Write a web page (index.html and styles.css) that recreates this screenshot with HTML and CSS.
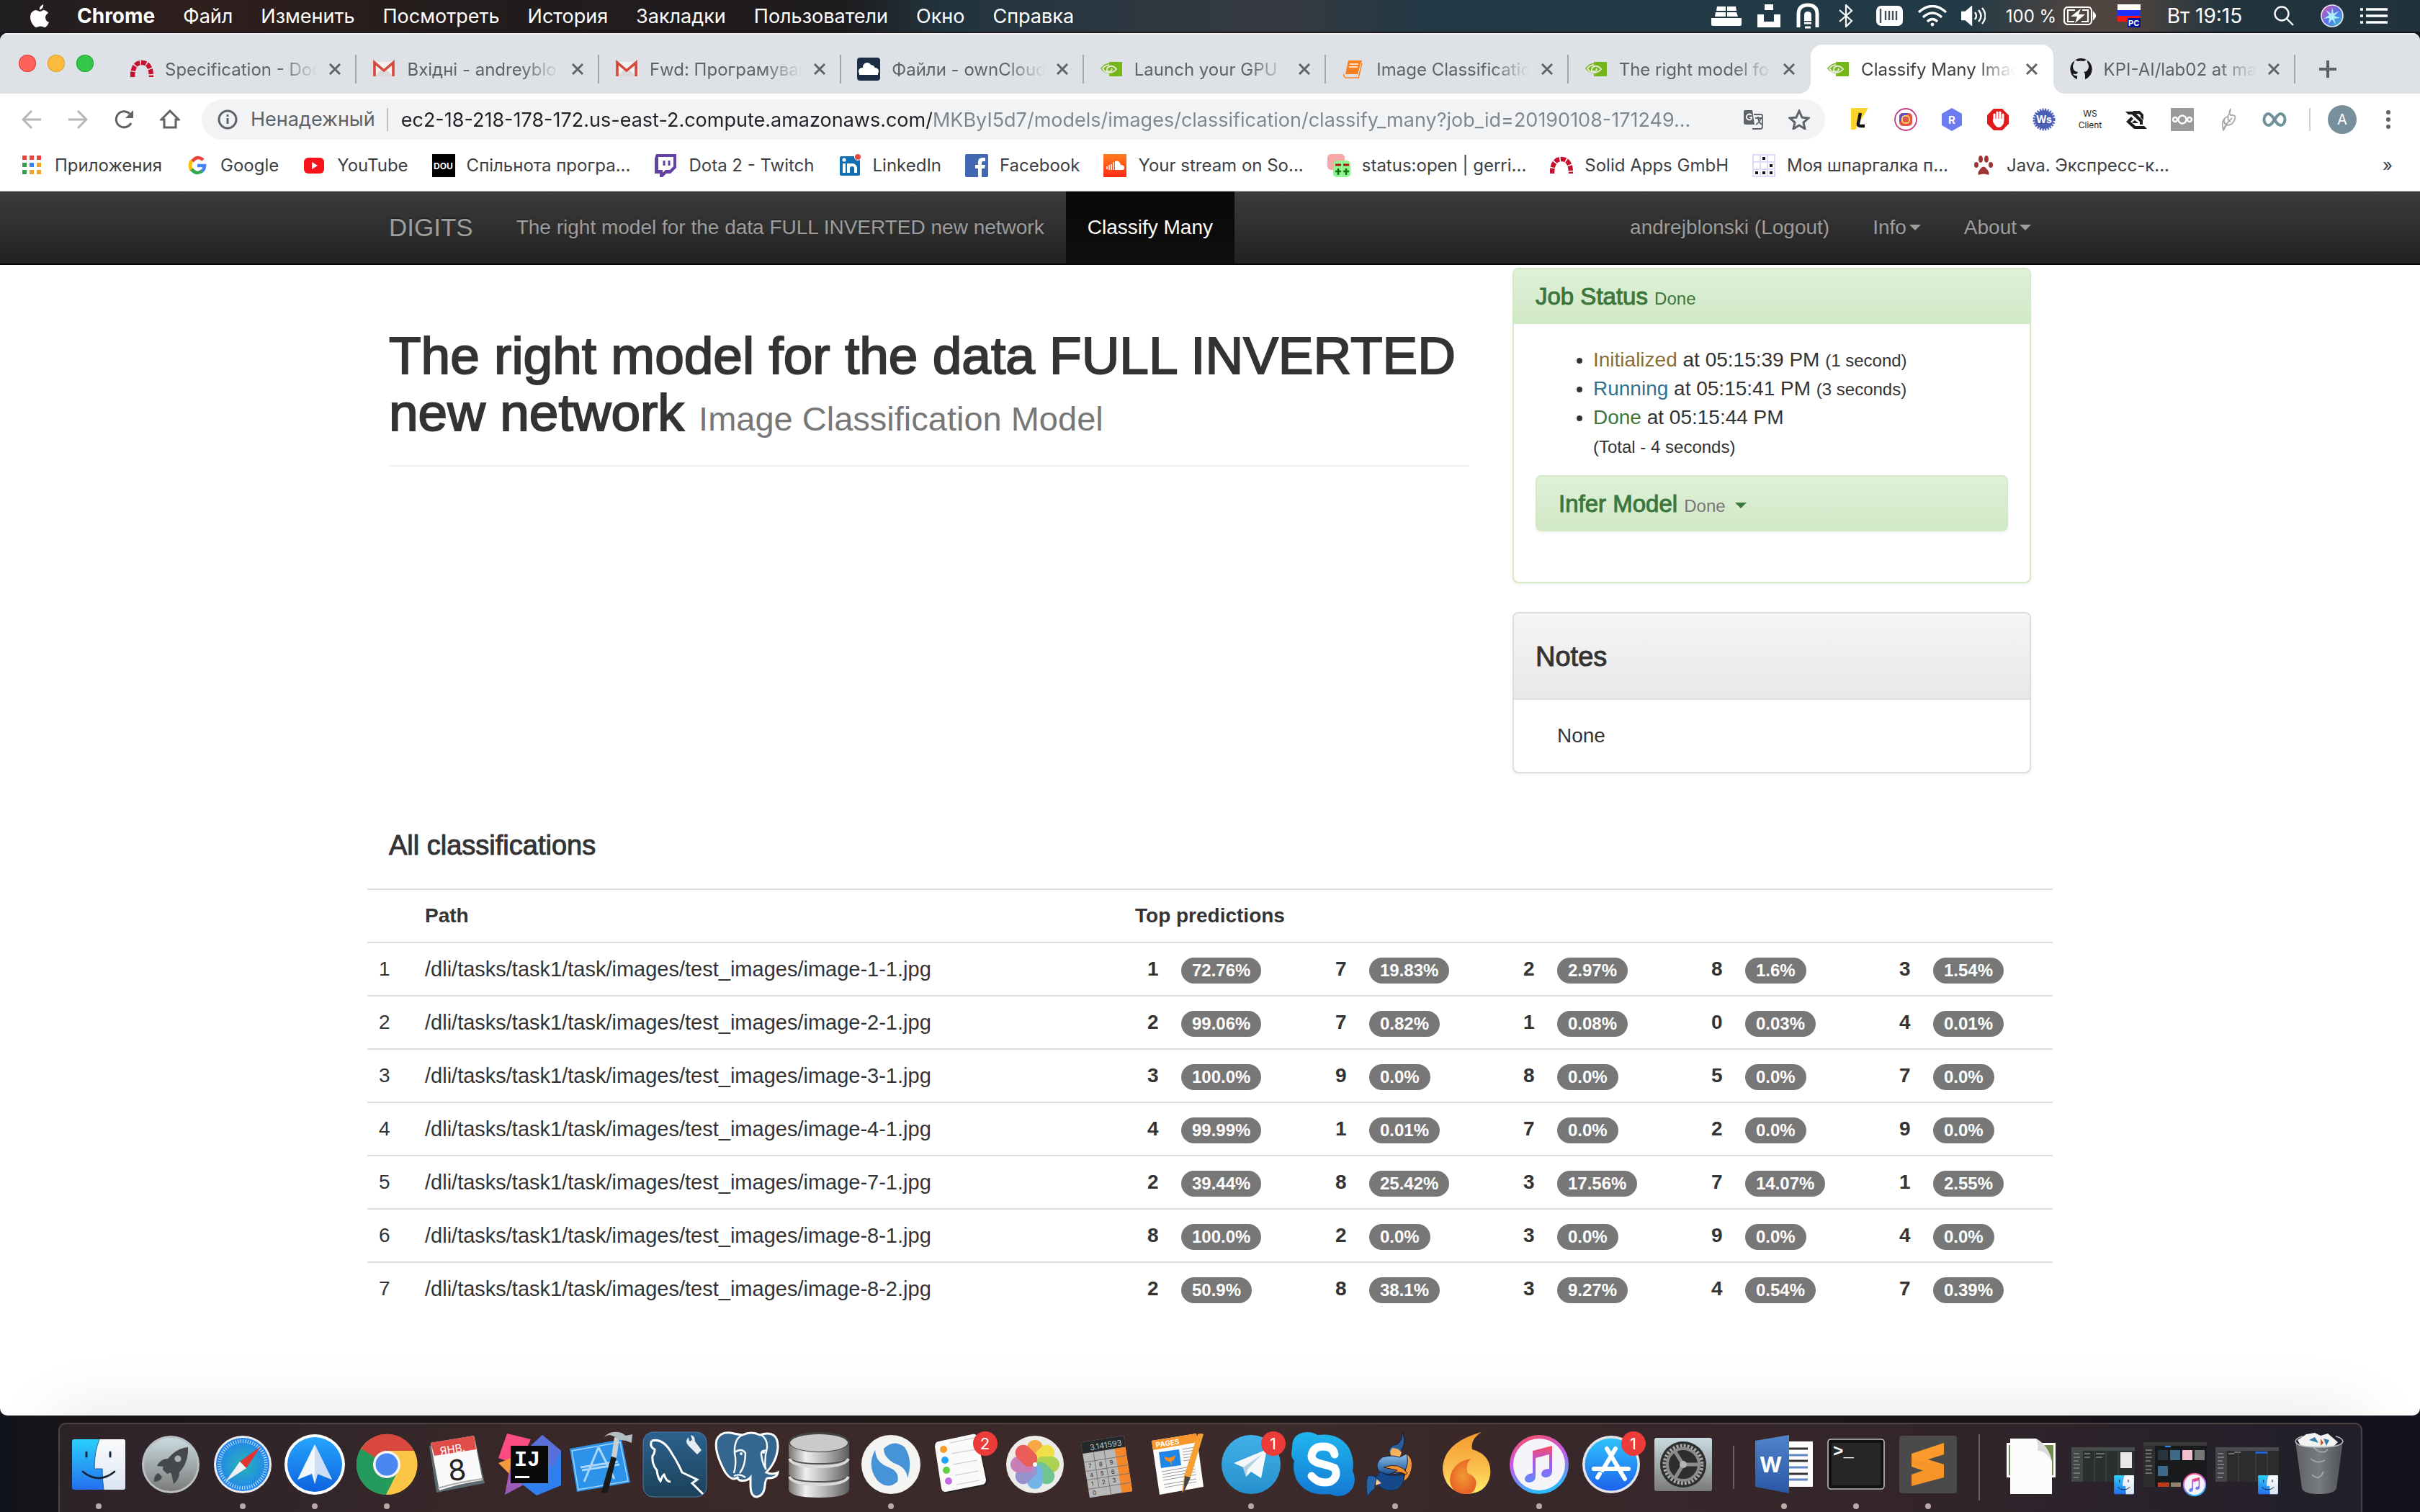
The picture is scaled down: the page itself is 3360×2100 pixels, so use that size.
FILE: index.html
```html
<!DOCTYPE html>
<html lang="ru">
<head>
<meta charset="utf-8">
<title>Classify Many Images</title>
<link rel="stylesheet" href="styles.css">
</head>
<body>
<svg class="defs" width="0" height="0" aria-hidden="true">
  <defs>
    <linearGradient id="gBlue" x1="0" y1="0" x2="0" y2="1"><stop offset="0" stop-color="#2fc3fb"/><stop offset="1" stop-color="#1d62ee"/></linearGradient>
    <linearGradient id="gSpark" x1="0" y1="0" x2="0" y2="1"><stop offset="0" stop-color="#26a5ff"/><stop offset="1" stop-color="#0d63dd"/></linearGradient>
    <linearGradient id="gFind" x1="0" y1="0" x2="0" y2="1"><stop offset="0" stop-color="#2bd0fb"/><stop offset="1" stop-color="#2470ef"/></linearGradient>
    <linearGradient id="gFace" x1="0" y1="0" x2="0" y2="1"><stop offset="0" stop-color="#fbfbfc"/><stop offset="1" stop-color="#dbe6f3"/></linearGradient>
    <linearGradient id="gGray" x1="0" y1="0" x2="0" y2="1"><stop offset="0" stop-color="#c9dbe0"/><stop offset="1" stop-color="#7b7b79"/></linearGradient>
    <linearGradient id="gSql" x1="0" y1="0" x2="0" y2="1"><stop offset="0" stop-color="#2c628e"/><stop offset="1" stop-color="#1c4159"/></linearGradient>
    <linearGradient id="gMetal" x1="0" y1="0" x2="1" y2="0"><stop offset="0" stop-color="#747474"/><stop offset=".28" stop-color="#efefef"/><stop offset=".6" stop-color="#b5b5b5"/><stop offset="1" stop-color="#5c5c5c"/></linearGradient>
    <linearGradient id="gTele" x1="0" y1="0" x2="0" y2="1"><stop offset="0" stop-color="#41b0e8"/><stop offset="1" stop-color="#2590cd"/></linearGradient>
    <linearGradient id="gSkype" x1="0" y1="0" x2="0" y2="1"><stop offset="0" stop-color="#20b6ef"/><stop offset="1" stop-color="#1379d3"/></linearGradient>
    <linearGradient id="gTunes" x1="0" y1="0" x2=".3" y2="1"><stop offset="0" stop-color="#fd4f57"/><stop offset=".5" stop-color="#c65bf0"/><stop offset="1" stop-color="#2fb6fb"/></linearGradient>
    <linearGradient id="gNote" x1="0" y1="0" x2="0" y2="1"><stop offset="0" stop-color="#fb4a5e"/><stop offset=".5" stop-color="#a459f3"/><stop offset="1" stop-color="#5a8dfa"/></linearGradient>
    <linearGradient id="gFlame" x1="0" y1="0" x2="0" y2="1"><stop offset="0" stop-color="#f59a2e"/><stop offset=".6" stop-color="#fbc04e"/><stop offset="1" stop-color="#fff06a"/></linearGradient>
    <linearGradient id="gWord" x1="0" y1="0" x2="0" y2="1"><stop offset="0" stop-color="#4f84cc"/><stop offset="1" stop-color="#2a57a4"/></linearGradient>
    <linearGradient id="gTrash" x1="0" y1="0" x2="1" y2="0"><stop offset="0" stop-color="#606467"/><stop offset=".5" stop-color="#777b7e"/><stop offset="1" stop-color="#505456"/></linearGradient>
    <linearGradient id="gCloud" x1="0" y1="0" x2="0" y2="1"><stop offset="0" stop-color="#ff7d1d"/><stop offset="1" stop-color="#ff2a17"/></linearGradient>
    <linearGradient id="gBody" x1="0" y1="0" x2="0" y2="1"><stop offset="0" stop-color="#8cc3ee"/><stop offset="1" stop-color="#1a4f94"/></linearGradient>
    <linearGradient id="gSiri" x1="0" y1="0" x2="1" y2="1"><stop offset="0" stop-color="#e84fb2"/><stop offset=".5" stop-color="#5b6fe8"/><stop offset="1" stop-color="#35c8c5"/></linearGradient>
    <radialGradient id="gSafari"><stop offset="0" stop-color="#26b4b4"/><stop offset="1" stop-color="#2383f0"/></radialGradient>
    <radialGradient id="gLeaf"><stop offset="0" stop-color="#f19a33"/><stop offset="1" stop-color="#e96425"/></radialGradient>
    <symbol id="nvidia" viewBox="0 0 32 32"><path d="M13 6h18v20H13z" fill="#76b51b"/><path d="M1 15q7-9 15-7 8 2 11 8-5 8-13 7Q5 21 1 15z" fill="#76b51b"/><path d="M13 10q-6 1-9 5 3 6 10 6 6-1 9-5-4-5-9-4-5 2-4 6 2 2 5 1 3-2 1-4" fill="none" stroke="#dfe9d3" stroke-width="2"/></symbol>
    <symbol id="gmail" viewBox="0 0 32 32"><path d="M3 6h26v20H3z" fill="#f3f1f0"/><path d="M3 26l10-10 3 3 3-3 10 10z" fill="#dcdad8"/><path d="M3 26V7l13 11L29 7v19" fill="none" stroke="#d5483c" stroke-width="3.6"/></symbol>
    <symbol id="arch" viewBox="0 0 32 32"><path d="M3 27Q3 7 16 7t13 20" fill="none" stroke="#c8102e" stroke-width="6.5" stroke-dasharray="7 1.6"/></symbol>
    <symbol id="finder" viewBox="0 0 96 96"><rect x="11" y="13" width="74" height="70" rx="3" fill="url(#gFind)"/><path d="M49 13h33q3 0 3 3v64q0 3-3 3H55q-2-14-2-29H42q0-24 7-41z" fill="url(#gFace)"/><path d="M49 13Q42 30 42 54h11q0 15 2 29" fill="none" stroke="#1d5fa8" stroke-width="1"/><path d="M31 31v6M64 31v6" stroke="#152b45" stroke-width="3" stroke-linecap="round"/><path d="M26 58q22 18 44 0" fill="none" stroke="#13202f" stroke-width="2.6" stroke-linecap="round"/></symbol>
    <symbol id="tunes" viewBox="0 0 96 96"><circle cx="48" cy="48" r="41" fill="url(#gTunes)"/><circle cx="48" cy="48" r="36" fill="#f5f4f8"/><path d="M39 29l27-7v35q0 8-8 9-7 0-7-5 1-7 11-7V34l-19 5v25q0 8-8 9-7 0-7-5 1-7 11-8z" fill="url(#gNote)"/></symbol>
  </defs>
</svg>

<div class="desktop">
  <header class="menubar">
    <nav class="menus" aria-label="Меню">
      <svg class="apple" viewBox="0 0 26 32" fill="#fff"><path d="M18 0q1 5-5 8-1-5 5-8zM13 10q2 0 5-2 4 0 7 4-6 4-3 10 1 2 4 3-2 5-5 7-2 0-4-1-3-1-6 0-3 2-5 0-6-6-6-13 0-8 7-10 2 0 6 2z"/></svg>
      <strong>Chrome</strong><span>Файл</span><span>Изменить</span><span>Посмотреть</span><span>История</span><span>Закладки</span><span>Пользователи</span><span>Окно</span><span>Справка</span>
    </nav>
    <div class="status">
      <span class="w54"><svg width="42" height="30" viewBox="0 0 42 30" fill="#fff"><path d="M8 2h12v6H7zM22 2h12l1 6H22zM6 10h14v6H5zM22 10h13l2 6H22zM0 18h42v9q0 2-2 2H2q-2 0-2-2z"/></svg></span>
      <span class="w64"><svg width="32" height="32" viewBox="0 0 32 32" fill="#fff"><path d="M10 0h12v8H10zM0 14h9v10h14V14h9v18H0z"/></svg></span>
      <span class="w44"><svg width="32" height="36" viewBox="0 0 32 36" fill="none" stroke="#fff"><path d="M3 34V16Q3 3 16 3t13 13v18" stroke-width="5"/><path d="M11 25v-8q0-5 5-5t5 5v8z" fill="#fff" stroke="none"/><path d="M11 28h10M12 34h8" stroke-width="3"/></svg></span>
      <span class="w62"><svg width="22" height="32" viewBox="0 0 22 32" fill="none" stroke="#fff" stroke-width="2.2"><path d="M2 8l17 15-8 8V1l8 8L2 24"/></svg></span>
      <span class="w60"><svg width="38" height="28" viewBox="0 0 38 28"><rect width="37" height="28" rx="7" fill="#fff"/><path d="M6 4v20M13 7v13M18 7v13M23 7v13M28 7v13" stroke="#41505a" stroke-width="2.4"/></svg></span>
      <span class="w58"><svg width="42" height="30" viewBox="0 0 42 30" fill="none" stroke="#fff" stroke-width="3.4"><path d="M2 10q19-17 38 0M8 17q13-12 26 0M14 23q7-7 14 0"/><circle cx="21" cy="27" r="2" fill="#fff" stroke-width="1"/></svg></span>
      <span class="w56"><svg width="34" height="28" viewBox="0 0 34 28" fill="none" stroke="#fff" stroke-width="2.4"><path d="M1 9h5l8-7v24l-8-7H1z" fill="#fff"/><path d="M19 9q4 5 0 10M24 6q7 8 0 16M29 3q9 11 0 22"/></svg></span>
      <span class="w160">100 %<svg width="46" height="26" viewBox="0 0 46 26" fill="none" stroke="#fff" stroke-width="2.2"><rect x="1" y="1" width="38" height="24" rx="5"/><path d="M42 9q4 4 0 8z" fill="#fff"/><path d="M16 5H6v16h9M26 5h8v16h-9" fill="none"/><path d="M24 3L10 14h9l-3 9 14-12h-9z" fill="#fff" stroke="none"/></svg></span>
      <span class="w56"><svg width="32" height="34" viewBox="0 0 32 34"><path d="M0 1h32v8H0z" fill="#fff"/><path d="M0 9h32v8H0z" fill="#1f2fff"/><path d="M0 17h32v8H0z" fill="#f21818"/><path d="M14 20h18v13H14z" fill="#00129c"/><text x="15" y="31" font-size="11" font-weight="700" fill="#fff">РС</text></svg></span>
      <span class="w154">Вт 19:15</span>
      <span class="w68"><svg width="32" height="30" viewBox="0 0 32 30" fill="none" stroke="#fff" stroke-width="2.4"><circle cx="12" cy="12" r="9.5"/><path d="M19 19l9 9"/></svg></span>
      <span class="w64"><svg width="32" height="32" viewBox="0 0 32 32"><circle cx="16" cy="16" r="15" fill="url(#gSiri)" stroke="#e8e8ee" stroke-width="1.6"/><path d="M16 4l2 9 8-4-7 7 8 3-8 1 2 8-5-7-5 6 1-8-8 1 8-5-5-7 8 5z" fill="#a9f0fb"/></svg></span>
      <span class="w52"><svg width="38" height="24" viewBox="0 0 38 24" stroke="#fff" stroke-width="3.4"><path d="M8 3h30M8 12h30M8 21h30M0 3h4M0 12h4M0 21h4"/></svg></span>
    </div>
  </header>

  <div class="window">
    <div class="tabstrip">
      <div class="lights"><button class="red" aria-label="Закрыть"></button><button class="yellow" aria-label="Свернуть"></button><button class="green" aria-label="Развернуть"></button></div>
      <div class="tabs">
        <div class="tab"><svg class="fav"><use href="#arch"/></svg><span class="title">Specification - Doc</span><button class="close" aria-label="Закрыть вкладку"><svg viewBox="0 0 18 18"><path d="M2 2l14 14M16 2L2 16"/></svg></button><i class="sep"></i></div>
        <div class="tab"><svg class="fav"><use href="#gmail"/></svg><span class="title">Вхідні - andreyblo</span><button class="close" aria-label="Закрыть вкладку"><svg viewBox="0 0 18 18"><path d="M2 2l14 14M16 2L2 16"/></svg></button><i class="sep"></i></div>
        <div class="tab"><svg class="fav"><use href="#gmail"/></svg><span class="title">Fwd: Програмуван</span><button class="close" aria-label="Закрыть вкладку"><svg viewBox="0 0 18 18"><path d="M2 2l14 14M16 2L2 16"/></svg></button><i class="sep"></i></div>
        <div class="tab"><svg class="fav" viewBox="0 0 32 32"><rect width="32" height="32" rx="4" fill="#1d2d44"/><g fill="#fff"><circle cx="14" cy="13" r="6"/><circle cx="7" cy="19" r="5"/><circle cx="25" cy="19" r="5"/><circle cx="19" cy="16" r="6"/><path d="M3 18h26v6H3z"/></g></svg><span class="title">Файли - ownCloud</span><button class="close" aria-label="Закрыть вкладку"><svg viewBox="0 0 18 18"><path d="M2 2l14 14M16 2L2 16"/></svg></button><i class="sep"></i></div>
        <div class="tab"><svg class="fav"><use href="#nvidia"/></svg><span class="title">Launch your GPU T</span><button class="close" aria-label="Закрыть вкладку"><svg viewBox="0 0 18 18"><path d="M2 2l14 14M16 2L2 16"/></svg></button><i class="sep"></i></div>
        <div class="tab"><svg class="fav" viewBox="0 0 32 32"><path d="M9 4h19l-5 19H5z" fill="#f97f1f"/><path d="M4 23v5h18l5-20M11 9h12M10 13h12" fill="none" stroke="#fff" stroke-width="1.6"/><path d="M3 23q0 5 3 5h17l5-20" fill="none" stroke="#f97f1f" stroke-width="1.6"/></svg><span class="title">Image Classificatio</span><button class="close" aria-label="Закрыть вкладку"><svg viewBox="0 0 18 18"><path d="M2 2l14 14M16 2L2 16"/></svg></button><i class="sep"></i></div>
        <div class="tab"><svg class="fav"><use href="#nvidia"/></svg><span class="title">The right model fo</span><button class="close" aria-label="Закрыть вкладку"><svg viewBox="0 0 18 18"><path d="M2 2l14 14M16 2L2 16"/></svg></button><i class="sep none"></i></div>
        <div class="tab active"><svg class="fav"><use href="#nvidia"/></svg><span class="title">Classify Many Imag</span><button class="close" aria-label="Закрыть вкладку"><svg viewBox="0 0 18 18"><path d="M2 2l14 14M16 2L2 16"/></svg></button><i class="sep none"></i></div>
        <div class="tab"><svg class="fav" viewBox="0 0 32 32"><path d="M16 1a15 15 0 0 0-5 29V25q-4 1-6-3 4 2 6 0 1-2 1-2-7-1-7-8 0-3 2-5-1-3 1-4l4 2q4-1 8 0l4-2q2 1 1 4 2 2 2 5 0 7-7 8 2 1 2 4v6A15 15 0 0 0 16 1z" fill="#191717"/></svg><span class="title">KPI-AI/lab02 at ma</span><button class="close" aria-label="Закрыть вкладку"><svg viewBox="0 0 18 18"><path d="M2 2l14 14M16 2L2 16"/></svg></button><i class="sep"></i></div>
      </div>
      <button class="newtab" aria-label="Новая вкладка"><svg width="26" height="26" viewBox="0 0 26 26" stroke="#5f6368" stroke-width="4"><path d="M13 1v24M1 13h24"/></svg></button>
    </div>

    <div class="toolbar">
      <button class="cell" aria-label="Назад"><svg width="28" height="26" viewBox="0 0 28 26" class="ln faint"><path d="M14 1L2 13l12 12M2 13h25"/></svg></button>
      <button class="cell" aria-label="Вперёд"><svg width="28" height="26" viewBox="0 0 28 26" class="ln faint"><path d="M14 1l12 12-12 12M26 13H1"/></svg></button>
      <button class="cell" aria-label="Обновить"><svg width="28" height="28" viewBox="0 0 28 28" class="ln"><path d="M24 19A11 11 0 1 1 22 6"/><path d="M27 1v11H16z" fill="#5f6368" stroke="none"/></svg></button>
      <button class="cell" aria-label="Домой"><svg width="28" height="28" viewBox="0 0 28 28" class="ln"><path d="M2 14L14 2l12 12h-4v11H6V14z"/></svg></button>
      <div class="omnibox">
        <svg width="28" height="28" viewBox="0 0 28 28" class="ln"><circle cx="14" cy="14" r="12"/><path d="M14 12v8M14 7v3"/></svg>
        <label for="url" class="secure">Ненадежный</label>
        <input id="url" class="url" type="text" value="ec2-18-218-178-172.us-east-2.compute.amazonaws.com/MKByI5d7/models/images/classification/classify_many?job_id=20190108-171249...">
        <button aria-label="Перевести"><svg width="30" height="30" viewBox="0 0 30 30"><path d="M3 2h11l3 20H5q-3 0-3-3V4z" fill="#5f6368"/><path d="M16 8h10q2 0 2 2v15q0 3-3 3H14" fill="none" stroke="#5f6368" stroke-width="1.8"/><path d="M18 13h9M22 11v2q1 6 5 9M26 13q-2 6-7 9" fill="none" stroke="#5f6368" stroke-width="1.8"/><path d="M13 9a4 4 0 1 0 0 5v-2h-3" fill="none" stroke="#fff" stroke-width="1.8"/></svg></button>
        <button aria-label="Добавить в закладки"><svg width="30" height="28" viewBox="0 0 30 28" class="ln"><path d="M15 2l4 9 9 1-7 6 2 9-8-5-8 5 2-9-7-6 9-1z"/></svg></button>
      </div>
      <div class="exts">
        <span class="cell"><svg width="32" height="32" viewBox="0 0 32 32"><path d="M4 0h24L10 30H4z" fill="#fdd32e"/><path d="M17 7l-3 14q-1 5 6 4h3" fill="none" stroke="#111" stroke-width="4.4"/></svg></span>
        <span class="cell"><svg width="32" height="32" viewBox="0 0 32 32"><circle cx="16" cy="16" r="15" fill="#fff" stroke="#c33c80" stroke-width="1.8"/><rect x="7" y="7" width="18" height="18" rx="5" fill="#e5534b"/><path d="M7 13q0-6 6-6h7L7 20z" fill="#6a48c9"/><rect x="11" y="11" width="10" height="10" rx="4" fill="none" stroke="#fcd65b" stroke-width="2"/></svg></span>
        <span class="cell"><svg width="32" height="32" viewBox="0 0 32 32"><path d="M16 0l14 8v16l-14 8L2 24V8z" fill="#6b7bf0"/><text x="11" y="22" font-size="15" font-weight="700" fill="#fff">R</text></svg></span>
        <span class="cell"><svg width="32" height="32" viewBox="0 0 32 32"><path d="M10 1h12l9 9v12l-9 9H10l-9-9V10z" fill="#e01b1b"/><path d="M11 18V9M15 15V6M19 15V6M23 18V9" stroke="#fff" stroke-width="3" stroke-linecap="round"/><path d="M9 15h15v6q-3 6-7 6t-8-8z" fill="#fff"/></svg></span>
        <span class="cell"><svg width="32" height="32" viewBox="0 0 32 32"><circle cx="16" cy="16" r="13" fill="#4a5fb5"/><circle cx="16" cy="16" r="14" fill="none" stroke="#4a5fb5" stroke-width="3" stroke-dasharray="2.2 1.5"/><text x="5" y="21" font-size="14" font-weight="700" fill="#fff">Ws</text></svg></span>
        <span class="cell ws">WS<br>Client</span>
        <span class="cell"><svg width="32" height="32" viewBox="0 0 32 32" fill="#1c1c1c"><path d="M1 5h12l12 12v6h-4v-4L10 9H5z"/><path d="M11 4h10l5 5v8l-4-4v-3l-3-2h-4z"/><path d="M9 12l3 3-4 4 7 6h12l4 4H13L2 19z"/><path d="M14 17l5 4h-7l-2-1z"/></svg></span>
        <span class="cell"><svg width="32" height="32" viewBox="0 0 32 32"><path d="M0 0h32v32H0z" fill="#9a9a9a"/><g fill="none" stroke="#fff" stroke-width="2.4"><circle cx="16" cy="16" r="5.5"/><circle cx="6" cy="16" r="3"/><circle cx="26" cy="16" r="3"/></g></svg></span>
        <span class="cell"><svg width="26" height="32" viewBox="0 0 26 32" fill="none" stroke="#a9a9a9" stroke-width="1.8"><path d="M16 1q-3 6 0 9 8-1 6 5-2 9-12 9l-4 7q-4-14 4-18 5-3 6-12zM6 29q6-10 12-15M8 14q-3 6 2 9M13 12q-2 5 3 7"/></svg></span>
        <span class="cell"><svg width="34" height="22" viewBox="0 0 34 22" fill="none" stroke="#6f9299" stroke-width="4"><path d="M17 11C13 5 11 3 8.500 3a6 8 0 0 0 0 16C13 19 14 15 17 11S22 3 25.500 3a6 8 0 0 1 0 16C22 19 20 16 17 11z"/></svg></span>
      </div>
      <i class="divider"></i>
      <button class="avatar" aria-label="Профиль">А</button>
      <button class="more" aria-label="Настройка"><svg width="6" height="28" viewBox="0 0 6 28" fill="#5f6368"><circle cx="3" cy="4" r="3"/><circle cx="3" cy="14" r="3"/><circle cx="3" cy="24" r="3"/></svg></button>
    </div>

    <nav class="bookmarks" aria-label="Закладки">
      <a href="#"><svg viewBox="0 0 32 32"><path d="M3 2h6v6H3zM13 2h6v6h-6zM23 2h6v6h-6z" fill="#e8453c"/><path d="M3 12h6v6H3zM3 22h6v6H3z" fill="#3a9b53"/><path d="M13 12h6v6h-6z" fill="#3b82f0"/><path d="M23 12h6v6h-6zM13 22h6v6h-6zM23 22h6v6h-6z" fill="#f0a42c"/></svg>Приложения</a>
      <a href="#"><svg viewBox="0 0 32 32" fill="none" stroke-width="4.6"><path d="M24 8Q16 1 9 10" stroke="#ea4335"/><path d="M8 9q-4 7 0 14" stroke="#fbbc05"/><path d="M8 21q7 9 15 2" stroke="#34a853"/><path d="M16 16h10q0 5-4 8" stroke="#4285f4"/></svg>Google</a>
      <a href="#"><svg viewBox="0 0 32 32"><rect x="2" y="5" width="28" height="22" rx="6" fill="#f8131b"/><path d="M13 11l8 5-8 5z" fill="#fff"/></svg>YouTube</a>
      <a href="#"><svg viewBox="0 0 32 32"><path d="M0 0h32v32H0z"/><text x="2" y="21" font-size="12" font-weight="700" fill="#fff">DOU</text></svg>Спільнота програ...</a>
      <a href="#"><svg viewBox="0 0 32 32"><path d="M3 0h28v19l-8 8h-6l-5 5H8v-5H1V6z" fill="#6441a4"/><path d="M6 4h21v13l-5 5h-6l-4 4v-4H6z" fill="#fff"/><path d="M14 9v7M21 9v7" stroke="#6441a4" stroke-width="3"/></svg>Dota 2 - Twitch</a>
      <a href="#"><svg viewBox="0 0 32 32"><rect x="2" y="3" width="28" height="27" rx="2" fill="#0f6fb2"/><path d="M8 13v13" stroke="#fff" stroke-width="4"/><path d="M14 26V13M14 19q1-4 5-4t5 4v7" fill="none" stroke="#fff" stroke-width="4"/><circle cx="8" cy="8" r="2.6" fill="#fff"/><circle cx="27" cy="4" r="4.500" fill="#e4483d" stroke="#fff"/></svg>LinkedIn</a>
      <a href="#"><svg viewBox="0 0 32 32"><rect width="32" height="32" rx="2" fill="#4267b2"/><path d="M18 32V20h-4v-5h4v-4q0-6 6-6h4v5h-3q-2 0-2 2v3h5l-1 5h-4v12z" fill="#fff"/></svg>Facebook</a>
      <a href="#"><svg viewBox="0 0 32 32"><path d="M0 0h32v32H0z" fill="url(#gCloud)"/><path d="M16 10q6-2 8 5 5 0 5 4 0 3-3 3H16z" fill="#fff"/><path d="M5 17v4M8 15v7M11 14v8M14 11v11" stroke="#fff" stroke-width="1.6"/></svg>Your stream on So...</a>
      <a href="#"><svg viewBox="0 0 32 32"><rect width="24" height="22" rx="5" fill="#f7a9aa"/><rect x="8" y="9" width="24" height="23" rx="5" fill="#90f590"/><path d="M11 15h8M22 15h8" stroke="#b31312" stroke-width="3"/><path d="M11 24h8M15 20v9M22 24h8M26 20v9" stroke="#15700f" stroke-width="2.6"/></svg>status:open | gerri...</a>
      <a href="#"><svg><use href="#arch"/></svg>Solid Apps GmbH</a>
      <a href="#"><svg viewBox="0 0 32 32"><path d="M1 1h30v30H1zM11 1v30M21 1v30M1 11h30M1 21h30" fill="#fff" stroke="#dcdcfa" stroke-width="2"/><path d="M14 4h4v4h-4zM24 14h4v4h-4zM4 24h4v4H4zM14 24h4v4h-4zM24 24h4v4h-4z" fill="#1b1020"/></svg>Моя шпаргалка п...</a>
      <a href="#"><svg viewBox="0 0 32 32" fill="#9c3534"><path d="M9 29q-2-4 4-10 3-3 6 0 6 6 4 10-7-3-14 0z"/><ellipse cx="6" cy="15" rx="3" ry="4"/><ellipse cx="12" cy="7" rx="3" ry="5"/><ellipse cx="20" cy="7" rx="3" ry="5"/><ellipse cx="26" cy="15" rx="3" ry="4"/></svg>Java. Экспресс-к...</a>
      <button class="overflow" aria-label="Другие закладки">»</button>
    </nav>

    <main class="page">
      <div class="navbar">
        <div class="container">
          <a class="brand" href="#">DIGITS</a>
          <a class="link" href="#">The right model for the data FULL INVERTED new network</a>
          <a class="link current" href="#">Classify Many</a>
          <span class="push"></span>
          <a class="link" href="#">andrejblonski (Logout)</a>
          <a class="link" href="#">Info<i class="caret"></i></a>
          <a class="link" href="#">About<i class="caret"></i></a>
        </div>
      </div>
      <div class="container top">
        <div class="main-col">
          <h1>The right model for the data FULL INVERTED new network <small>Image Classification Model</small></h1>
        </div>
        <aside class="side-col">
          <section class="panel success">
            <div class="panel-heading"><h4>Job Status <small>Done</small></h4></div>
            <div class="panel-body">
              <ul>
                <li><span class="warn">Initialized</span> at 05:15:39 PM <small>(1 second)</small></li>
                <li><span class="info">Running</span> at 05:15:41 PM <small>(3 seconds)</small></li>
                <li><span class="done">Done</span> at 05:15:44 PM</li>
              </ul>
              <div class="total"><small>(Total - 4 seconds)</small></div>
              <button class="infer"><span class="infer-name">Infer Model</span> <small>Done</small> <i class="caret"></i></button>
            </div>
          </section>
          <section class="panel">
            <div class="panel-heading notes"><h4>Notes</h4></div>
            <div class="panel-body notes-body">None</div>
          </section>
        </aside>
      </div>
      <div class="container block">
        <h4 class="table-title">All classifications</h4>
        <table>
          <colgroup><col class="c-num"><col class="c-path"><col class="c-pred"><col class="c-pred"><col class="c-pred"><col class="c-pred"><col></colgroup>
          <thead><tr><th></th><th>Path</th><th colspan="5">Top predictions</th></tr></thead>
          <tbody>
            <tr><td>1</td><td>/dli/tasks/task1/task/images/test_images/image-1-1.jpg</td><td><b>1</b><span class="badge">72.76%</span></td><td><b>7</b><span class="badge">19.83%</span></td><td><b>2</b><span class="badge">2.97%</span></td><td><b>8</b><span class="badge">1.6%</span></td><td><b>3</b><span class="badge">1.54%</span></td></tr>
            <tr><td>2</td><td>/dli/tasks/task1/task/images/test_images/image-2-1.jpg</td><td><b>2</b><span class="badge">99.06%</span></td><td><b>7</b><span class="badge">0.82%</span></td><td><b>1</b><span class="badge">0.08%</span></td><td><b>0</b><span class="badge">0.03%</span></td><td><b>4</b><span class="badge">0.01%</span></td></tr>
            <tr><td>3</td><td>/dli/tasks/task1/task/images/test_images/image-3-1.jpg</td><td><b>3</b><span class="badge">100.0%</span></td><td><b>9</b><span class="badge">0.0%</span></td><td><b>8</b><span class="badge">0.0%</span></td><td><b>5</b><span class="badge">0.0%</span></td><td><b>7</b><span class="badge">0.0%</span></td></tr>
            <tr><td>4</td><td>/dli/tasks/task1/task/images/test_images/image-4-1.jpg</td><td><b>4</b><span class="badge">99.99%</span></td><td><b>1</b><span class="badge">0.01%</span></td><td><b>7</b><span class="badge">0.0%</span></td><td><b>2</b><span class="badge">0.0%</span></td><td><b>9</b><span class="badge">0.0%</span></td></tr>
            <tr><td>5</td><td>/dli/tasks/task1/task/images/test_images/image-7-1.jpg</td><td><b>2</b><span class="badge">39.44%</span></td><td><b>8</b><span class="badge">25.42%</span></td><td><b>3</b><span class="badge">17.56%</span></td><td><b>7</b><span class="badge">14.07%</span></td><td><b>1</b><span class="badge">2.55%</span></td></tr>
            <tr><td>6</td><td>/dli/tasks/task1/task/images/test_images/image-8-1.jpg</td><td><b>8</b><span class="badge">100.0%</span></td><td><b>2</b><span class="badge">0.0%</span></td><td><b>3</b><span class="badge">0.0%</span></td><td><b>9</b><span class="badge">0.0%</span></td><td><b>4</b><span class="badge">0.0%</span></td></tr>
            <tr><td>7</td><td>/dli/tasks/task1/task/images/test_images/image-8-2.jpg</td><td><b>2</b><span class="badge">50.9%</span></td><td><b>8</b><span class="badge">38.1%</span></td><td><b>3</b><span class="badge">9.27%</span></td><td><b>4</b><span class="badge">0.54%</span></td><td><b>7</b><span class="badge">0.39%</span></td></tr>
          </tbody>
        </table>
      </div>
    </main>
  </div>

  <footer class="dock">
    <span class="app run"><svg viewBox="0 0 96 96"><use href="#finder"/></svg></span>
    <span class="app"><svg viewBox="0 0 96 96"><circle cx="48" cy="48" r="40" fill="#b9bfc2"/><circle cx="48" cy="48" r="37" fill="url(#gGray)"/><path d="M72 24q-16 1-28 16-10 0-15 10l9 1q-1 2-1 4l6 6q2 0 4-2l2 2 3 14q8-6 8-16 13-14 12-35zM31 60q-7 3-6 12 9 0 11-7z" fill="#45494b"/><circle cx="58" cy="40" r="4.6" fill="#a9b2b5"/></svg></span>
    <span class="app run"><svg viewBox="0 0 96 96"><circle cx="48" cy="48" r="40" fill="#e9ebee"/><circle cx="48" cy="48" r="37" fill="url(#gSafari)"/><circle cx="48" cy="48" r="32.500" fill="none" stroke="#d4ecff" stroke-width="5" stroke-dasharray="1 2.4"/><path d="M73 23L53 53l-9-9z" fill="#e5342f"/><path d="M44 44l9 9-29 19z" fill="#eef0f2"/></svg></span>
    <span class="app run"><svg viewBox="0 0 96 96"><circle cx="48" cy="48" r="42" fill="#fff"/><circle cx="48" cy="48" r="38" fill="url(#gSpark)"/><path d="M48 20L24 69l20-8 4 14 4-14 20 8z" fill="#f2f6fd"/><path d="M48 20v55l4-14 20 8z" fill="#cfdef4"/></svg></span>
    <span class="app run"><svg viewBox="0 0 96 96"><circle cx="48" cy="48" r="42" fill="#f9c646"/><path d="M48 48L12 27A42 42 0 0 1 86 29H48z" fill="#d9483c"/><path d="M48 48L12 26A42 42 0 0 0 47 90L64 56z" fill="#249a5c"/><path d="M48 29h38A42 42 0 0 1 47 90l18-32z" fill="#fbc646"/><circle cx="48" cy="48" r="19" fill="#f5f5f5"/><circle cx="48" cy="48" r="15.500" fill="#4a87ee"/></svg></span>
    <span class="app"><svg viewBox="0 0 96 96"><path d="M7 22l63-12 14 64-67 13z" fill="#5c6a70"/><path d="M9 18l60-10 12 62q-30 4-60 14z" fill="#fafafa"/><path d="M9 18l60-10 3 19L14 36z" fill="#e04c48"/><path d="M19 81q30-9 62-13" fill="none" stroke="#aaa" stroke-width="2"/><text x="22" y="32" font-size="15" fill="#fff" transform="rotate(-9 40 28)">ЯНВ.</text><text x="33" y="70" font-size="40" fill="#222" transform="rotate(-6 46 55)">8</text></svg></span>
    <span class="app"><svg viewBox="0 0 96 96"><path d="M15 5l33 8-28 62-8 16L20 45 3 39z" fill="#fc4c83"/><path d="M3 46l20-8v28z" fill="#f39a3c"/><path d="M20 50l30 20-38 20z" fill="#9a5cb8"/><path d="M48 22L64 7l26 22v48L56 91 34 74z" fill="#2f80ee"/><path d="M64 7l26 22-12 24-30-31z" fill="#5a70d8"/><path d="M20 22h52v52H20z" fill="#0a0a0a"/><path d="M26 64h20v3H26z" fill="#fff"/><text x="25" y="50" font-size="30" font-family="Liberation Mono, monospace" font-weight="700" fill="#fff">IJ</text></svg></span>
    <span class="app"><svg viewBox="0 0 96 96"><path d="M2 26l72-13 12 60-74 13z" fill="#2d93ea"/><path d="M5 29l67-12 11 54-69 12z" fill="none" stroke="#a9d7fb" stroke-width="1.400"/><path d="M22 72l20-48M42 24l22 44M17 52l52-8M19 56l52-8" stroke="#a9d7fb" stroke-width="3" fill="none"/><path d="M46 86l14-50 7 2-12 48q-5 4-9 0z" fill="#191919"/><path d="M60 37l4-27 7 1-4 28z" fill="#c8ced2"/><path d="M50 10q8-10 24-6l6 4 9-2-1 12-8-3-8-1-6-4-8-3q-4 0-8 3z" fill="#b3bcc2"/></svg></span>
    <span class="app"><svg viewBox="0 0 96 96"><rect x="4" y="3" width="88" height="90" rx="14" fill="url(#gSql)" stroke="#4b81ab"/><path d="M16 15q16-4 28 18 8 12 14 26l21 10-7 5 15 15M16 15q-4 8 4 12 0 6-3 9-1 12 6 20 1 10 5 15 3-8 5-9 3 10 9 10" fill="none" stroke="#fff" stroke-width="3"/><path d="M67 10q-6 6 0 12l12 12 6-6-9-12q0-8-6-9l2 7-4 2z" fill="#e6edf2"/></svg></span>
    <span class="app"><svg viewBox="0 0 96 96"><path d="M30 5q10 2 12 2 12-6 24 0 26-8 25 18-2 20-16 34 8 4 16 0-1 8-14 8-3 0-4 10-1 14-11 16-9 0-9-16V66q-5 6-15 4-4-2-2-5-8 8-18-6Q2 30 6 14 12 0 30 5z" fill="#34668f" stroke="#fff" stroke-width="3"/><path d="M42 7Q30 12 31 32q3 14-1 28M68 7q9 6 8 18-4 14-2 30M30 32q10-8 16 0 0 18-8 28M76 29q-9-2-8 6 2 14 7 20M46 66q-8-6-16-2" fill="none" stroke="#fff" stroke-width="2.400"/><circle cx="40" cy="33" r="2" fill="#fff"/><circle cx="71" cy="31" r="2" fill="#fff"/></svg></span>
    <span class="app"><svg viewBox="0 0 96 96"><path d="M6 16v66q0 12 42 12t42-12V16z" fill="url(#gMetal)"/><ellipse cx="48" cy="17" rx="42" ry="14" fill="#444"/><ellipse cx="48" cy="18" rx="40" ry="12" fill="#cacaca"/><path d="M6 37q4 10 42 10t42-10M6 62q4 10 42 10t42-10" fill="none" stroke="#505050" stroke-width="2"/><path d="M7 40q5 11 41 11t41-11M7 65q5 11 41 11t41-11" fill="none" stroke="#dadada" stroke-width="4"/></svg></span>
    <span class="app run"><svg viewBox="0 0 96 96"><circle cx="48" cy="48" r="41" fill="#f4f4f3"/><path d="M71 67q8-26-4-43Q52 12 38 26q0 12 14 20 18 6 19 21zM26 28q-12 22 3 42 14 14 28 2 4-14-12-20-18-6-19-24z" fill="#4793d8"/></svg></span>
    <span class="app"><svg viewBox="0 0 96 96"><path d="M15 20l48-12q6-1 7 5l12 58q0 6-6 7L26 88q-5 0-6-5z" fill="#222"/><path d="M14 16l47-10q6-1 7 5l12 58q0 6-5 7L24 86q-5 0-6-5L9 23q0-6 5-7z" fill="#fafafa"/><circle cx="21" cy="27" r="5" fill="#fb9a2d"/><circle cx="23" cy="42" r="5" fill="#1fa5f7"/><circle cx="25" cy="56" r="5" fill="#5fce42"/><circle cx="28" cy="71" r="5" fill="#c36ee0"/><path d="M30 18l34-7M32 33l34-6M34 48l34-6M37 63l33-6M39 76l32-6" stroke="#c6c6c6"/></svg><em>2</em></span>
    <span class="app"><svg viewBox="0 0 96 96"><circle cx="48" cy="48" r="40" fill="#ececeb"/><g opacity=".88"><rect x="37" y="14" width="22" height="34" rx="11" fill="#f9a02f"/><rect x="37" y="14" width="22" height="34" rx="11" fill="#f1de33" transform="rotate(45 48 48)"/><rect x="37" y="14" width="22" height="34" rx="11" fill="#a5cf3e" transform="rotate(90 48 48)"/><rect x="37" y="14" width="22" height="34" rx="11" fill="#5fbf86" transform="rotate(135 48 48)"/><rect x="37" y="14" width="22" height="34" rx="11" fill="#63aee6" transform="rotate(180 48 48)"/><rect x="37" y="14" width="22" height="34" rx="11" fill="#8d86cc" transform="rotate(225 48 48)"/><rect x="37" y="14" width="22" height="34" rx="11" fill="#c56fb0" transform="rotate(270 48 48)"/><rect x="37" y="14" width="22" height="34" rx="11" fill="#ea4a45" transform="rotate(315 48 48)"/></g><circle cx="48" cy="48" r="3" fill="#fff"/></svg></span>
    <span class="app"><svg viewBox="0 0 96 96"><g transform="rotate(-9 48 48)"><path d="M17 12h60v78H17z" fill="#b9b9b9"/><path d="M17 12h60v16H17z" fill="#23282a"/><path d="M62 28h15v62H62z" fill="#f6862a"/><path d="M32 28v50M47 28v62M17 40h60M17 53h60M17 65h60M17 78h60" stroke="#777" stroke-width="1"/><text x="28" y="25" font-size="11" fill="#b9c4c4">3.141593</text><g font-size="8" fill="#333"><text x="22" y="49">7</text><text x="37" y="49">8</text><text x="52" y="49">9</text><text x="22" y="62">4</text><text x="37" y="62">5</text><text x="52" y="62">6</text><text x="22" y="74">1</text><text x="37" y="74">2</text><text x="52" y="74">3</text><text x="22" y="87">0</text></g></g></svg></span>
    <span class="app"><svg viewBox="0 0 96 96"><path d="M10 15l62-10 10 74-61 11z" fill="#fdfdfd"/><path d="M10 15l62-10 2 12-62 11z" fill="#f9962b"/><text x="16" y="24" font-size="10" font-weight="700" fill="#fff" transform="rotate(-9 20 22)">PAGES</text><path d="M20 31l28-4 3 22-28 4z" fill="#1f86e8"/><path d="M27 37q8 4 16-2-1 8-6 9l1 6-3-6q-6 0-8-7z" fill="#f68b1f"/><path d="M52 27l18-3M53 31l17-3M53 35l18-3M54 39l17-3M54 43l18-3M24 58l46-8M25 62l46-8M25 66l46-8M26 70l46-8M27 76l45-8M28 80l44-8" stroke="#9a9a9a" stroke-width="1.200"/><path d="M74 6q4-2 8 0L64 66l-12 22 3-24z" fill="#f4a132"/><path d="M56 64l8 2-10 22z" fill="#444"/></svg></span>
    <span class="app run"><svg viewBox="0 0 96 96"><circle cx="48" cy="48" r="41" fill="url(#gTele)"/><path d="M24 46l46-19-8 40-14-9-7 7-4-13z" fill="#f4f8fb"/><path d="M37 52l26-18-20 21-2 10z" fill="#b8cfe0"/></svg><em>1</em></span>
    <span class="app"><svg viewBox="0 0 96 96"><path d="M5 26Q4 4 26 3q8 0 14 4 30-4 44 18 8 16 5 32 6 12 0 24-10 14-26 10-2-1-6-2-32 4-46-20-6-14-3-26-6-6-3-17z" fill="url(#gSkype)"/><path d="M64 34Q62 23 48 23t-16 13q0 8 13 11t19 6q6 12-6 19-16 4-26-8" fill="none" stroke="#fff" stroke-width="11" stroke-linecap="round"/></svg></span>
    <span class="app run"><svg viewBox="0 0 96 96"><path d="M58 3q6 14-1 24-2 8-8 10-8-2-10-8 2-8 12-9 7-5 7-17z" fill="#2b5f9c" stroke="#10213a"/><path d="M44 25q8 0 13 6l-3 9-11-3q-4-6 1-12z" fill="#f6b25e"/><path d="M62 32q12 6 9 22-3 14-12 18 6-18 3-40z" fill="#f09440" stroke="#3a1c10"/><path d="M30 38q14-4 24 0l10-5q4 16-4 25-16 8-34 0-8-10 4-20z" fill="url(#gBody)" stroke="#10213a"/><path d="M32 52q22-8 33 8l-2 2q-12-8-26 2l14-8z" fill="#f0922d" stroke="#3a1c10"/><path d="M28 58q10 8 32 4 2 12-8 20-14 6-27-4l-6-10z" fill="#17498a" stroke="#0f2a4d"/><path d="M20 66l9 8-8 3z" fill="#f6c58e"/><path d="M10 64q10-2 12 4-3 10-2 14-6 2-10 11-4-16 0-29z" fill="#2566ab" stroke="#0f2a4d"/></svg></span>
    <span class="app"><svg viewBox="0 0 96 96"><path d="M68 3q-16 10-13 24 28 8 25 36-5 26-34 26-29-4-32-34Q14 18 68 3z" fill="url(#gFlame)"/><path d="M53 40q-8 8-4 20 14 6 11 18-2 12-16 11-19-2-20-20 2-24 29-29z" fill="url(#gLeaf)"/></svg></span>
    <span class="app run"><svg viewBox="0 0 96 96"><use href="#tunes"/></svg></span>
    <span class="app"><svg viewBox="0 0 96 96"><circle cx="48" cy="48" r="40" fill="#e4e6ea"/><circle cx="48" cy="48" r="36.500" fill="url(#gBlue)"/><path d="M42 26l25 42M54 26L36 56M24 54h48M32 61l-3 5" stroke="#fff" stroke-width="6" stroke-linecap="round"/></svg><em>1</em></span>
    <span class="app"><svg viewBox="0 0 96 96"><rect x="8" y="11" width="80" height="74" rx="3" fill="url(#gGray)"/><circle cx="48" cy="48" r="32" fill="#2c2e30"/><circle cx="48" cy="48" r="26" fill="none" stroke="#a6a6a4" stroke-width="5" stroke-dasharray="3 2.100"/><circle cx="48" cy="48" r="22" fill="none" stroke="#8b8b89" stroke-width="4"/><path d="M48 48h22M48 48L36 29M48 48L36 68" stroke="#8b8b89" stroke-width="5"/><circle cx="48" cy="48" r="5" fill="#b5b5b3"/></svg></span>
    <i class="dock-sep short"></i>
    <span class="app run"><svg viewBox="0 0 96 96"><path d="M50 16h38v63H50z" fill="#fdfdfd"/><path d="M54 26h27M54 43h27M54 61h27" stroke="#333" stroke-width="3"/><path d="M54 35h27M54 52h27M54 69h27" stroke="#5e86c2" stroke-width="3"/><path d="M8 15l47-8v81L8 79z" fill="url(#gWord)"/><text x="14" y="59" font-size="30" font-weight="700" fill="#fff">W</text></svg></span>
    <span class="app run"><svg viewBox="0 0 96 96"><rect x="9" y="13" width="78" height="69" rx="4" fill="#111" stroke="#b9bcbc" stroke-width="1.600"/><path d="M14 18h68v59H14z" fill="#262626"/><text x="16" y="37" font-size="24" font-family="Liberation Mono, monospace" font-weight="700" fill="#fff">&gt;_</text></svg></span>
    <span class="app run"><svg viewBox="0 0 96 96"><rect x="8" y="8" width="80" height="80" rx="4" fill="#4a4a4a"/><path d="M70 18L25 33v18l45 15V48L48 41l22-7z" fill="#fb9a2a"/><path d="M70 48v18L25 78V62l22-8-22-6v-6z" fill="#f79427"/></svg></span>
    <i class="dock-sep"></i>
    <span class="app"><svg viewBox="0 0 96 96"><path d="M14 18h68v48H14z" fill="#fff"/><path d="M17 21h62v42H17z" fill="#6f8a4a"/><path d="M19 12h36q18 12 22 32v45H19z" fill="#fcfcfc"/><path d="M55 12q4 8 2 17 12 0 20 15-4-22-22-32z" fill="#dadada"/></svg></span>
    <span class="app"><svg viewBox="0 0 96 96"><path d="M4 24h88v48H4z" fill="#29302f"/><path d="M4 24h16v48H4z" fill="#414746"/><path d="M4 24h88v5H4z" fill="#454b4a"/><path d="M7 33h8M7 38h9M7 43h7M7 48h9M7 53h8M7 60h9M7 66h7M22 33h8M22 38h8M38 33h12M38 38h9" stroke="#7d8583" stroke-width="1.400"/><path d="M36 29v43M52 29v43M69 29v43" stroke="#485150"/><path d="M72 31h16v22H72z" fill="#e8e8e8"/><use href="#finder" x="58" y="58" width="38" height="36"/></svg></span>
    <span class="app"><svg viewBox="0 0 96 96"><path d="M4 17h88v62H4z" fill="#191a1b"/><path d="M4 17h16v62H4z" fill="#2d2e2f"/><path d="M4 17h88v5H4z" fill="#3b3b3c"/><path d="M7 28h9M7 33h8M7 38h9M7 43h7M7 50h9M7 55h8M7 60h9" stroke="#858585" stroke-width="1.400"/><path d="M34 22h8v2h-8z" fill="#2f8af0"/><path d="M24 28h14v14H24z" fill="#26343f"/><path d="M41 28h14v14H41zM24 50h14v14H24z" fill="#3d6887"/><path d="M58 28h14v14H58z" fill="#f0bfd0"/><path d="M75 28h14v14H75z" fill="#777"/><path d="M24 73h16v6H24z" fill="#c23a1c"/><path d="M42 73h14v6H42z" fill="#91836f"/><use href="#tunes" x="56" y="57" width="38" height="38"/></svg></span>
    <span class="app"><svg viewBox="0 0 96 96"><path d="M4 24h88v48H4z" fill="#2c2c2d"/><path d="M4 24h16v48H4z" fill="#444345"/><path d="M4 24h88v5H4z" fill="#4a494b"/><path d="M7 33h8M7 38h9M7 43h7M7 48h9M7 53h8M7 60h9M7 66h7M22 33h8M30 31h9" stroke="#8a8a8c" stroke-width="1.400"/><path d="M36 29v43M60 29v43M76 29v43" stroke="#4b4b4d"/><path d="M60 30h16v3H60z" fill="#1e62d8"/><use href="#finder" x="58" y="58" width="38" height="36"/></svg></span>
    <span class="app"><svg viewBox="0 0 96 96"><path d="M18 14L30 6l12-2 8 4 10-3 14 12-8 8H24z" fill="#f2f2f2"/><path d="M34 14l8-4 5 8zM54 12l8 2-4 8z" fill="#3a7ea8"/><path d="M50 12l4 6-4 4z" fill="#c35a30"/><path d="M15 16l9 65q3 8 24 8t24-8l9-65q-4 8-33 8t-33-8z" fill="url(#gTrash)"/><path d="M40 24q12 12 20 3M36 40q10 8 20 2M38 62q10 10 16-4" fill="none" stroke="#a0a4a7" stroke-width="2"/><path d="M15 16q2 8 33 8t33-8q-1-5-10-7M15 16q1-5 10-7" fill="none" stroke="#b7bbbe" stroke-width="1.600"/></svg></span>
  </footer>
</div>
</body>
</html>
```

FILE: styles.css
```css
* { box-sizing: border-box; }
body {
  margin: 0;
  font-family: Inter, "Liberation Sans", sans-serif;
}
button { border: 0; background: none; padding: 0; font: inherit; color: inherit; }
a { color: inherit; text-decoration: none; }
.defs { position: absolute; }

.desktop {
  display: flex;
  flex-direction: column;
  min-height: 100vh;
  overflow: hidden;
  background: linear-gradient(90deg, #12141c 0%, #1d1618 4%, #231b1a 45%, #1c1618 80%, #12131c 97%);
}

/* system menu bar */
.menubar {
  display: flex;
  justify-content: space-between;
  align-items: center;
  height: 44px;
  margin-bottom: 2px;
  padding: 0 38px 0 42px;
  color: #fff;
  font-size: 27px;
  background: linear-gradient(90deg, #1f1d1f 0%, #2f1f1d 8%, #221c1c 19%, #1f1c1e 35%, #21343f 39%, #363a42 53%, #223945 59%, #213a46 81%, #504541 86%, #4f443f 88%, #22353f 92%, #20323d 100%);
}
.menus { display: flex; align-items: center; gap: 39px; white-space: nowrap; }
.menus strong { font-size: 28px; }
.apple { width: 26px; height: 32px; }
.status { display: flex; align-items: center; white-space: nowrap; }
.status span { display: flex; align-items: center; justify-content: center; gap: 10px; }
.w44 { width: 44px; }
.w52 { width: 52px; }
.w54 { width: 54px; }
.w56 { width: 56px; }
.w58 { width: 58px; }
.w60 { width: 60px; }
.w62 { width: 62px; }
.w64 { width: 64px; }
.w68 { width: 68px; }
.w154 { width: 154px; font-size: 28px; }
.w160 { width: 160px; font-size: 24px; }

/* browser window */
.window {
  flex: 1;
  display: flex;
  flex-direction: column;
  overflow: hidden;
  border-radius: 10px;
  background: #fff;
}
.tabstrip {
  display: flex;
  align-items: flex-end;
  height: 84px;
  background: #dee1e6;
  box-shadow: inset 0 2px #eef0f3;
}
.lights { flex: none; display: flex; align-items: center; gap: 16px; width: 159px; height: 84px; padding-left: 26px; }
.lights button { width: 24px; height: 24px; border-radius: 50%; }
.red { background: #fc615c; box-shadow: inset 0 0 0 1px #e0443e; }
.yellow { background: #fdbc40; box-shadow: inset 0 0 0 1px #dea034; }
.green { background: #34c84a; box-shadow: inset 0 0 0 1px #27a935; }
.tabs { flex: 1; min-width: 0; display: grid; grid-template-columns: repeat(9, minmax(0, 1fr)); }
.tab {
  display: flex;
  align-items: center;
  height: 68px;
  padding-left: 22px;
  color: #5f6368;
  font-size: 24px;
  position: relative;
}
.fav { width: 32px; height: 32px; margin-right: 16px; flex: none; }
.title {
  flex: 1;
  overflow: hidden;
  white-space: nowrap;
  -webkit-mask-image: linear-gradient(90deg, #000 75%, transparent 100%);
  mask-image: linear-gradient(90deg, #000 75%, transparent 100%);
}
.close { display: flex; justify-content: center; width: 24px; margin: 0 16px 0 12px; }
.close svg { width: 18px; height: 18px; stroke: #5f6368; stroke-width: 3; }
.sep { width: 2px; height: 40px; background: #a3a6ab; }
.sep.none { background: none; }
.tab.active { background: #fff; color: #3c4043; border-radius: 16px 16px 0 0; }
.tab.active::before, .tab.active::after {
  content: "";
  position: absolute;
  bottom: 0;
  width: 16px;
  height: 16px;
}
.tab.active::before { left: -16px; background: radial-gradient(circle at 0 0, transparent 16px, #fff 16px); }
.tab.active::after { right: -16px; background: radial-gradient(circle at 100% 0, transparent 16px, #fff 16px); }
.newtab { flex: none; display: flex; align-items: center; width: 173px; height: 68px; padding-left: 32px; }

.toolbar { display: flex; align-items: center; height: 72px; padding: 0 8px 0 12px; }
.cell { display: flex; align-items: center; justify-content: center; width: 64px; height: 40px; }
.ln { fill: none; stroke: #5f6368; stroke-width: 3; }
.faint { stroke: #b4b6b9; }
.omnibox {
  flex: 1;
  display: flex;
  align-items: center;
  height: 56px;
  margin: 0 16px 0 12px;
  padding: 0 21px 0 22px;
  border-radius: 28px;
  background: #f1f3f4;
  color: #5f6368;
  font-size: 27px;
}
.omnibox button { display: flex; margin-left: 34px; }
.secure { margin-left: 18px; padding-right: 16px; border-right: 2px solid #bdc1c6; line-height: 32px; }
.url {
  flex: 1;
  min-width: 0;
  height: 40px;
  margin-left: 18px;
  padding: 0;
  border: 0;
  outline: 0;
  font: inherit;
  color: #202124;
  background: linear-gradient(90deg, #202124 737px, #80868b 737px);
  -webkit-background-clip: text;
  background-clip: text;
  -webkit-text-fill-color: transparent;
}
.exts { display: flex; }
.ws { font-size: 12px; line-height: 16px; text-align: center; color: #222; }
.divider { width: 2px; height: 32px; margin: 0 16px; background: #cfd1d4; }
.avatar { width: 40px; height: 40px; margin: 0 8px; border-radius: 50%; background: #78909c; color: #fff; font-size: 20px; }
.more { display: flex; justify-content: center; width: 72px; }

.bookmarks {
  display: flex;
  align-items: center;
  gap: 33px;
  height: 64px;
  padding: 0 38px 8px 28px;
  border-bottom: 1px solid #b5b8b6;
  color: #3c4043;
  font-size: 24px;
  white-space: nowrap;
}
.bookmarks a { display: flex; align-items: center; gap: 16px; }
.bookmarks svg { width: 32px; height: 32px; }
.overflow { margin-left: auto; }

/* DIGITS page */
.page {
  flex: 1;
  color: #333;
  font: 28px/40px "Liberation Sans", Arial, sans-serif;
}
.container { display: flex; width: 100%; max-width: 2340px; margin: 0 auto; }
.top { display: grid; grid-template-columns: minmax(0, 2fr) minmax(0, 1fr); }
.block { display: block; }
.navbar {
  border-bottom: 2px solid #080808;
  background: linear-gradient(#3c3c3c, #222);
  color: #9d9d9d;
  text-shadow: 0 -2px rgba(0, 0, 0, .25);
}
.brand { padding: 30px; font-size: 35px; }
.link { display: flex; align-items: center; padding: 30px; }
.current { color: #fff; background: linear-gradient(#080808, #0f0f0f); }
.push { flex: 1; }
.caret {
  display: inline-block;
  margin-left: 4px;
  border: 8px solid transparent;
  border-top-color: currentColor;
  border-bottom: 0;
  vertical-align: middle;
}
.main-col { padding: 86px 30px 0; }
.side-col { padding: 4px 30px 0; }
h1, h4 { margin: 0; font-weight: 400; }
small { font-size: 24px; line-height: 1; }
h1 {
  padding-bottom: 34px;
  border-bottom: 2px solid #eee;
  font-size: 73px;
  line-height: 79px;
  -webkit-text-stroke: 2px #333;
}
h1 small { font-size: 47px; color: #777; -webkit-text-stroke: 0; }
.panel {
  margin-bottom: 40px;
  border: 2px solid #ddd;
  border-radius: 8px;
  background: #fff;
  box-shadow: 0 2px 4px rgba(0, 0, 0, .05);
}
.success { border-color: #d6e9c6; }
.panel-heading {
  padding: 20px 30px;
  background: linear-gradient(#dff0d8, #d0e9c6);
  color: #3c763d;
  border-radius: 6px 6px 0 0;
}
.panel-heading h4 { font-size: 33px; line-height: 36px; -webkit-text-stroke: 1px currentColor; }
.panel-heading small { -webkit-text-stroke: 0; }
.panel-body { padding: 30px; }
.panel-body ul { margin: 0; padding-left: 80px; }
.total { margin-bottom: 20px; padding-left: 80px; }
.warn { color: #8a6d3b; }
.info { color: #31708f; }
.done { color: #3c763d; }
.infer {
  display: block;
  width: 100%;
  margin-bottom: 40px;
  padding: 20px 30px 18px;
  border: 2px solid #d6e9c6;
  border-radius: 8px;
  background: linear-gradient(#dff0d8, #d0e9c6);
  box-shadow: 0 2px 4px rgba(0, 0, 0, .05);
  color: #3c763d;
  font-size: 33px;
  line-height: 36px;
  text-align: left;
}
.infer-name { -webkit-text-stroke: 1px currentColor; }
.infer small { color: #777; }
.panel-heading.notes {
  padding: 40px 30px 38px;
  border-bottom: 2px solid #ddd;
  background: linear-gradient(#f5f5f5, #e8e8e8);
  color: #333;
}
.notes h4 { font-size: 38px; line-height: 40px; }
.notes-body { padding-left: 60px; }
.table-title { margin: 40px 30px; font-size: 38px; line-height: 40px; -webkit-text-stroke: 1px #333; }
table { width: 100%; table-layout: fixed; border-spacing: 0; margin-bottom: 40px; }
th, td { padding: 16px; border-top: 2px solid #ddd; text-align: left; }
th { font-weight: 700; }
td:nth-child(2) { font-size: 29px; }
td:nth-child(n+3) { height: 74px; padding: 16px 0 0 33px; vertical-align: top; }
.c-num { width: 64px; }
.c-path { width: 986px; }
.c-pred { width: 261px; }
td b { display: inline-block; width: 47px; }
.badge {
  display: inline-block;
  height: 36px;
  margin-top: 4px;
  padding: 6px 15px;
  border-radius: 20px;
  background: #777;
  color: #fff;
  font-size: 24px;
  font-weight: 700;
  line-height: 24px;
  vertical-align: top;
}

/* dock */
.dock {
  display: flex;
  align-self: center;
  height: 124px;
  margin-top: 10px;
  padding: 8px 8px 0 4px;
  border: 2px solid #4d4244;
  border-bottom: 0;
  border-radius: 10px 10px 0 0;
  background: linear-gradient(90deg, #2c2329, #3b2929 25%, #3d2a2a 55%, #33252a 80%, #211f2a);
  box-shadow: 0 0 100px rgba(0, 0, 0, .14);
  position: relative;
}
.app { position: relative; width: 100px; height: 114px; padding: 0 2px; }
.app svg { width: 96px; height: 96px; }
.run::after {
  content: "";
  position: absolute;
  left: 46px;
  top: 102px;
  width: 8px;
  height: 8px;
  border-radius: 50%;
  background: #b9a9ab;
}
.app em {
  position: absolute;
  left: 64px;
  top: 2px;
  width: 34px;
  height: 34px;
  border-radius: 50%;
  background: #ec3b38;
  color: #fff;
  font-size: 22px;
  font-style: normal;
  line-height: 34px;
  text-align: center;
}
.dock-sep { width: 2px; height: 92px; margin: 6px 21px 0 20px; background: #6b5e62; }
.dock-sep.short { height: 60px; margin: 22px 19px 0; }
```
